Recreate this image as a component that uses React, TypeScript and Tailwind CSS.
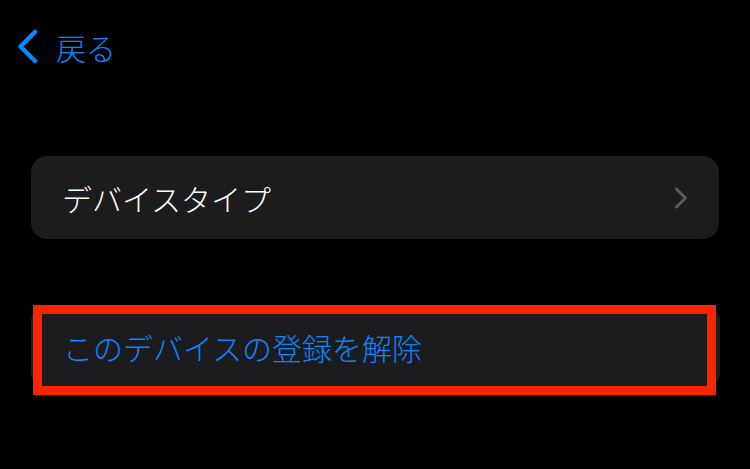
export default function App() {
  return (
    <div
      className="w-[750px] h-[469px] bg-black overflow-hidden font-light"
      style={{ fontFamily: '"Noto Sans CJK JP", "Noto Sans", sans-serif' }}
    >
      <div className="flex items-center pl-[17px] pt-[29px] h-[64px]">
        <svg width="21" height="35" viewBox="0 0 21 35" fill="none">
          <path
            d="M18 3 L3.5 17.5 L18 32"
            stroke="#0a84ff"
            strokeWidth="4.5"
            strokeLinecap="round"
            strokeLinejoin="round"
          />
        </svg>
        <span className="ml-[18px] text-[30px] leading-none text-[#0a84ff]">戻る</span>
      </div>

      <div className="ml-[31px] mt-[92px] w-[688px] h-[83px] rounded-[16px] bg-[#1c1c1e] flex items-center justify-between pl-[31px] pr-[31px]">
        <span className="text-[30px] leading-none text-white">デバイスタイプ</span>
        <svg width="14" height="22" viewBox="0 0 14 22" fill="none">
          <path
            d="M2.5 2 L11.5 11 L2.5 20"
            stroke="#5c5c60"
            strokeWidth="3"
            strokeLinecap="round"
            strokeLinejoin="round"
          />
        </svg>
      </div>

      <div className="relative ml-[31px] mt-[66px] w-[689px] h-[84px] rounded-[16px] bg-[#1c1c1e] flex items-center pl-[32px]">
        <span className="text-[30px] leading-none text-[#0a84ff]">このデバイスの登録を解除</span>
        <div className="absolute left-[2px] top-0 w-[683px] h-[90px] border-[9px] border-[#fc2400]" />
      </div>
    </div>
  );
}
